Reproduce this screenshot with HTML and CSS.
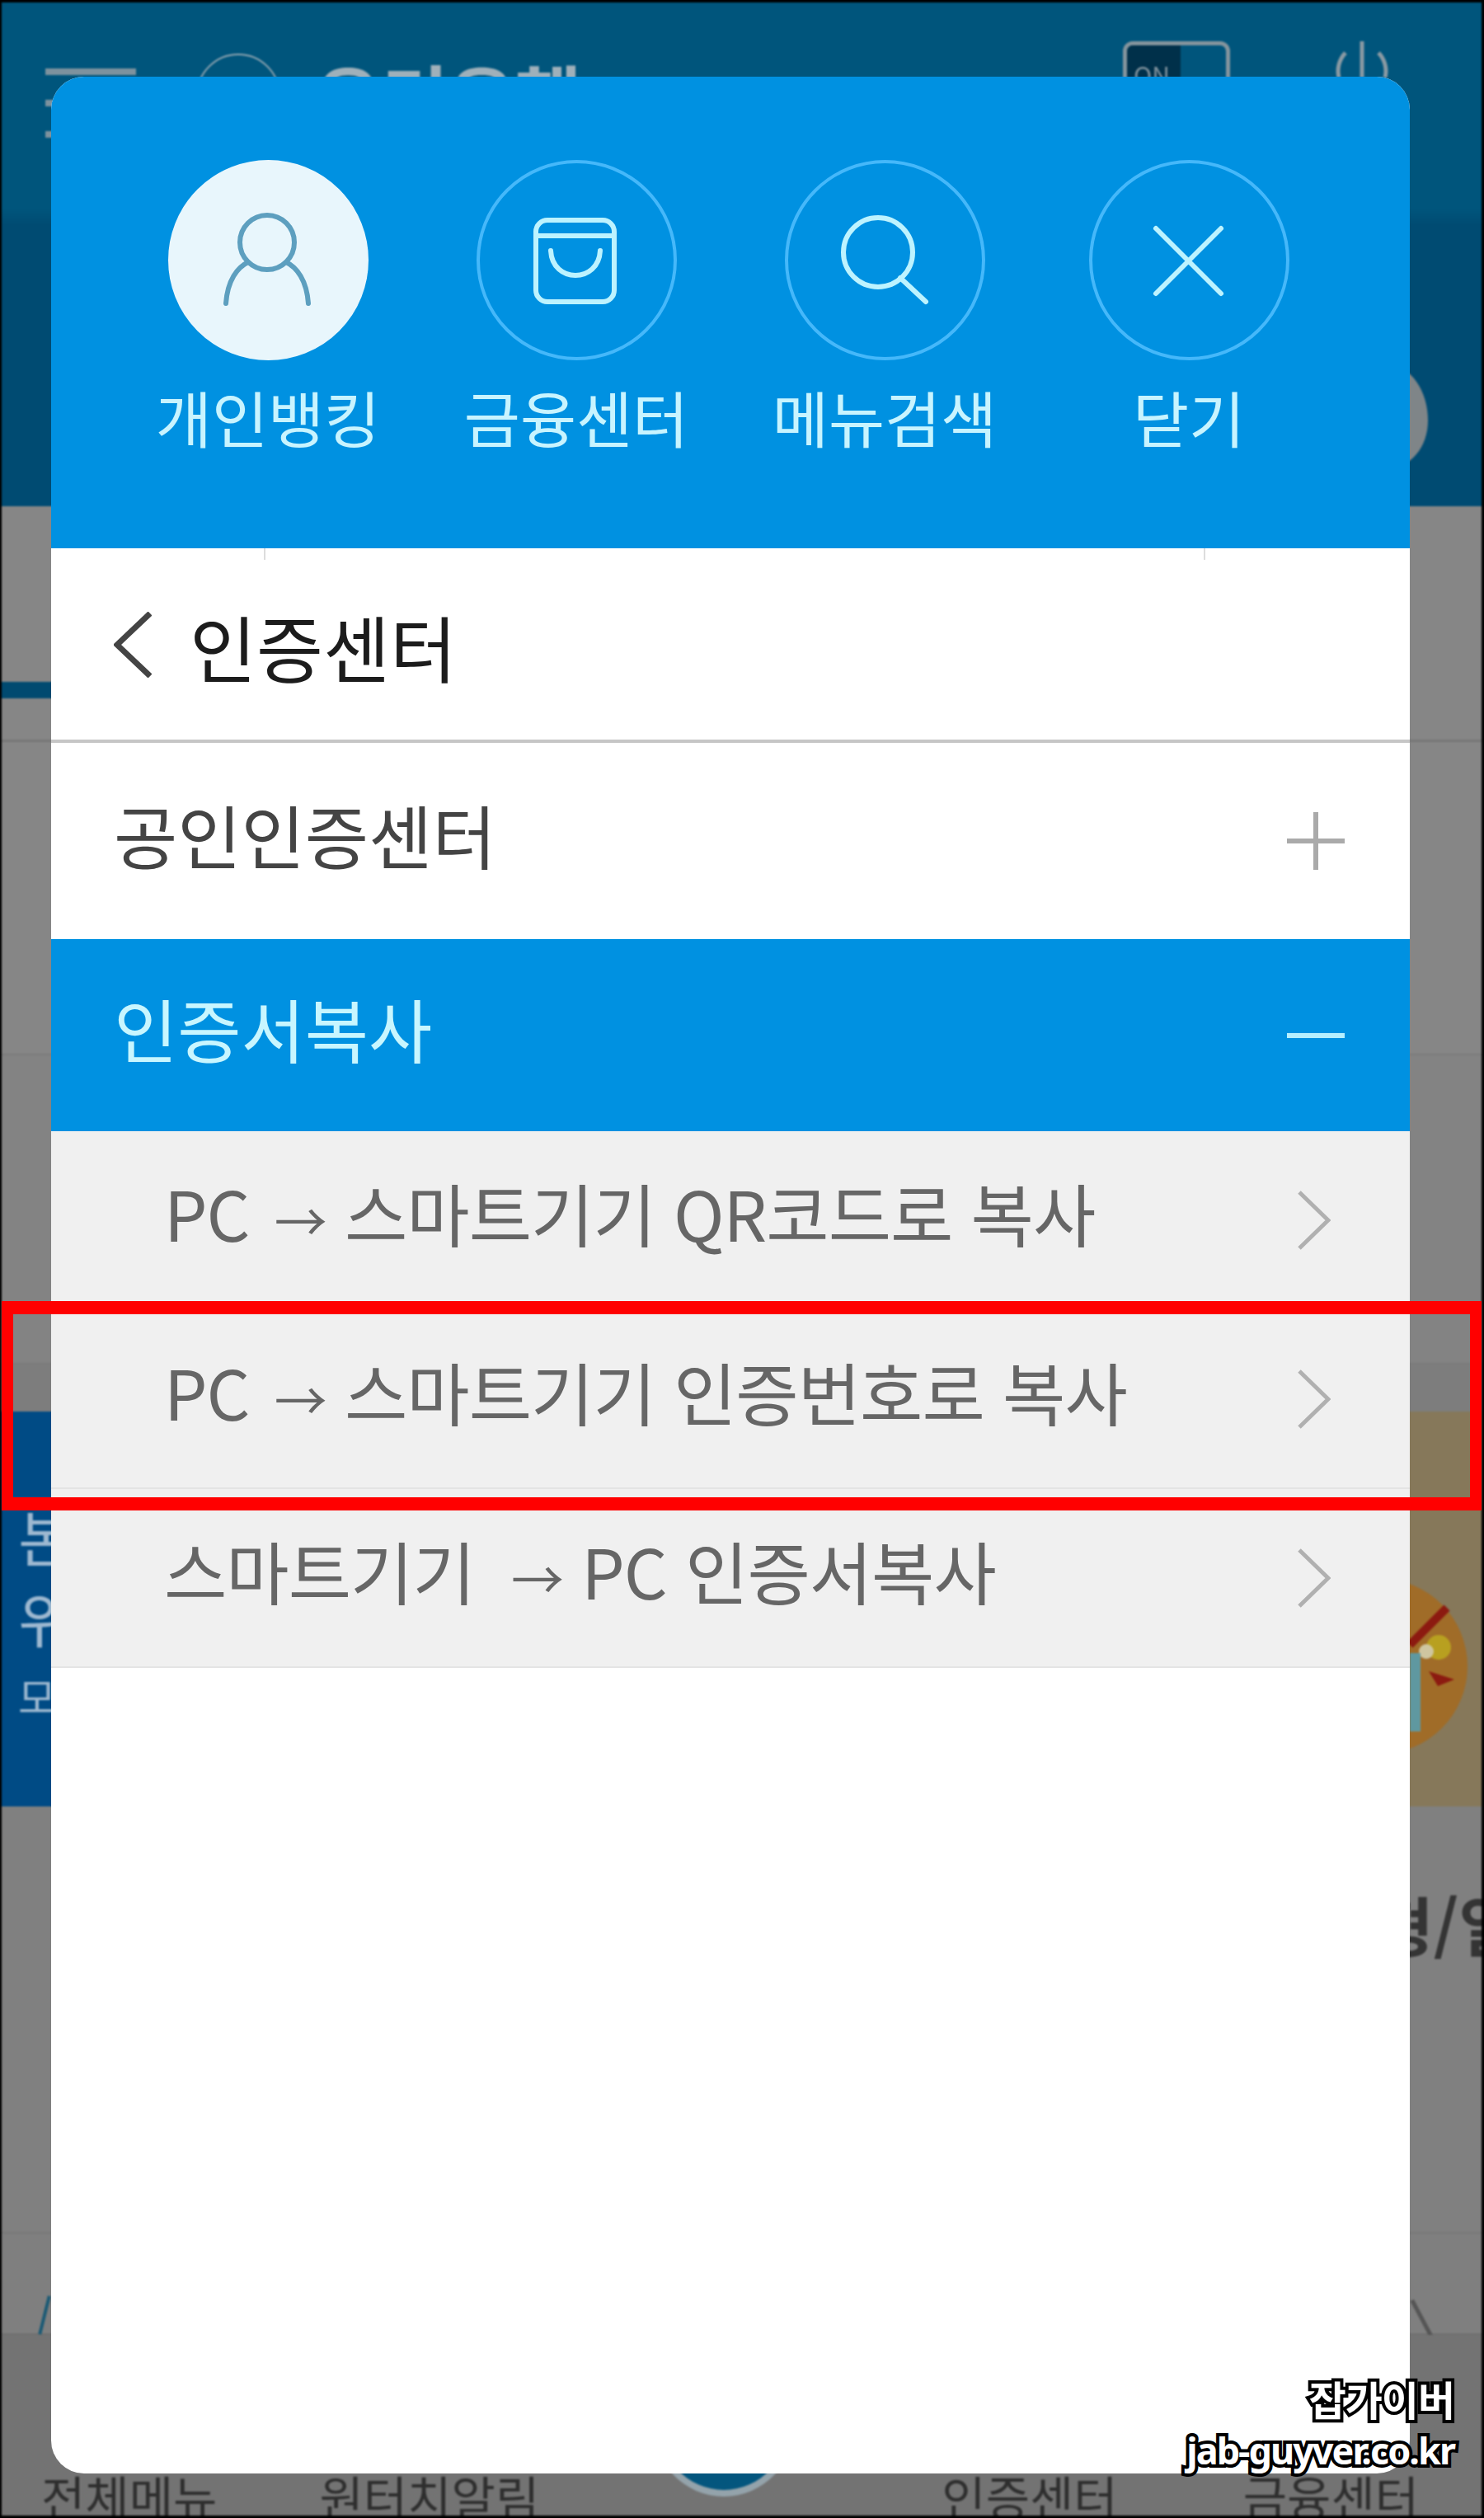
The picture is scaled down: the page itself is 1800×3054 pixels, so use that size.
FILE: index.html
```html
<!DOCTYPE html>
<html lang="ko">
<head>
    <meta charset="UTF-8">
    <meta name="viewport" content="width=device-width, initial-scale=1.0">
    <title>인증센터</title>
    <link rel="stylesheet" href="styles.css">
</head>
<body>
<div class="page">
    <!-- dimmed app behind the menu -->
    <div class="app">
        <header class="app-top">
            <div class="burger"><span></span><span></span><span></span></div>
            <div class="logo-ring"></div>
            <div class="bank-name">우리은행</div>
            <div class="toggle"><span class="toggle-on">ON</span></div>
            <svg class="power" viewBox="0 0 76 70"><path d="M38 0V44M18 14A32 32 0 0 0 10 44M58 14A32 32 0 0 1 66 44" fill="none" stroke="#8a9aa3" stroke-width="5"/></svg>
            <div class="face"></div>
        </header>
        <div class="tabs"><span class="tab-bar"></span></div>
        <div class="plain plain-a"></div>
        <div class="plain plain-b"></div>
        <div class="plain plain-c"></div>
        <div class="banner">
            <div class="banner-left">
                <div class="banner-big">본</div>
                <div class="banner-big">위</div>
                <div class="banner-small">모</div>
            </div>
            <div class="banner-right">
                <svg class="emblem" viewBox="0 0 212 212">
                    <circle cx="106" cy="106" r="106" fill="#a06c28"/>
                    <path d="M142 80L187 35" stroke="#8c1a10" stroke-width="10"/>
                    <circle cx="177" cy="83" r="15" fill="#b8a020"/>
                    <circle cx="162" cy="88" r="9" fill="#cfc6a0"/>
                    <path d="M165 112L196 122L176 130Z" fill="#8c1a10"/>
                    <rect x="142" y="90" width="13" height="95" fill="#5f98a0"/>
                </svg>
            </div>
        </div>
        <div class="card-row"><span class="card-text">형/일</span></div>
        <div class="slide-row"><span class="slide-left"></span><span class="slide-right"></span></div>
        <nav class="tabbar">
            <span>전체메뉴</span>
            <span>원터치알림</span>
            <span class="tab-round"></span>
            <span>인증센터</span>
            <span>금융센터</span>
        </nav>
    </div>

    <!-- menu panel -->
    <div class="panel">
        <div class="panel-head">
            <div class="quick">
                <div class="quick-circle active">
                    <svg viewBox="0 0 243 243"><ellipse cx="120" cy="100" rx="33" ry="33" /><path d="M70 174C72 146 84 130 97 124M170 174C168 146 156 130 143 124"/></svg>
                </div>
                <div class="quick-label">개인뱅킹</div>
            </div>
            <div class="quick">
                <div class="quick-circle">
                    <svg viewBox="0 0 243 243"><rect x="72" y="73" width="95" height="99" rx="14"/><path d="M72 92H167M90 110C92 150 148 150 150 110"/></svg>
                </div>
                <div class="quick-label">금융센터</div>
            </div>
            <div class="quick">
                <div class="quick-circle">
                    <svg viewBox="0 0 243 243"><circle cx="113" cy="112" r="42"/><path d="M140 143L171 172"/></svg>
                </div>
                <div class="quick-label">메뉴검색</div>
            </div>
            <div class="quick">
                <div class="quick-circle">
                    <svg viewBox="0 0 243 243"><path d="M81 83L160 162M160 83L81 162"/></svg>
                </div>
                <div class="quick-label">닫기</div>
            </div>
        </div>

        <div class="title-row">
            <svg class="back" viewBox="0 0 46 80"><path d="M44 2L4 40L44 78"/></svg>
            <span>인증센터</span>
        </div>

        <div class="menu-row">
            <span>공인인증센터</span>
            <svg class="sign" viewBox="0 0 70 70"><path d="M0 35H70M35 0V70"/></svg>
        </div>
        <div class="menu-row open">
            <span>인증서복사</span>
            <svg class="sign" viewBox="0 0 70 70"><path d="M0 35H70"/></svg>
        </div>

        <div class="sub-list">
            <div class="sub-row">
                <span class="sub-text">PC <i class="arrow">→</i> 스마트기기 QR코드로 복사</span>
                <svg class="chev" viewBox="0 0 40 72"><path d="M2 2L37 36L2 70"/></svg>
            </div>
            <div class="sub-row">
                <span class="sub-text">PC <i class="arrow">→</i> 스마트기기 인증번호로 복사</span>
                <svg class="chev" viewBox="0 0 40 72"><path d="M2 2L37 36L2 70"/></svg>
            </div>
            <div class="sub-row">
                <span class="sub-text">스마트기기 <i class="arrow arrow-mid">→</i> PC 인증서복사</span>
                <svg class="chev" viewBox="0 0 40 72"><path d="M2 2L37 36L2 70"/></svg>
            </div>
        </div>
    </div>

    <div class="red-box"></div>

    <div class="watermark">
        <div class="wm-name">잡가이버</div>
        <div class="wm-url">jab-guyver.co.kr</div>
    </div>
</div>
</body>
</html>
```

FILE: styles.css
```css
* { box-sizing: border-box; }
html, body { margin: 0; padding: 0; background: #000; }
body { font-family: "Noto Sans CJK KR", "Noto Sans", sans-serif; }

.page { position: relative; width: 1800px; height: 3054px; padding: 3px 3px 3px 2px; overflow: hidden; background: #000; }

/* app behind */
.app { display: flex; flex-direction: column; height: 100%; overflow: hidden; background: #868686; filter: blur(0.8px); }
.app-top { position: relative; display: flex; align-items: flex-start; height: 611px; flex: none; background: linear-gradient(#00557c 0, #00557c 250px, #004b72 270px, #004b72 100%); }
.burger { display: flex; flex-direction: column; gap: 30px; width: 110px; margin: 80px 0 0 53px; }
.burger span { height: 8px; background: #7d929e; }
.logo-ring { width: 102px; height: 102px; margin: 62px 0 0 73px; border: 2px solid #8fa5b1; border-radius: 50%; }
.bank-name { margin: 52px 0 0 42px; font-size: 88px; line-height: 120px; font-weight: 700; color: #9fb0ba; white-space: nowrap; }
.toggle { position: absolute; left: 1360px; top: 47px; width: 130px; height: 90px; border: 5px solid #84949d; border-radius: 12px; overflow: hidden; }
.toggle-on { display: block; width: 65px; height: 100%; padding-left: 8px; background: #00304a; color: #7f919c; font-size: 30px; line-height: 70px; }
.power { position: absolute; left: 1612px; top: 47px; width: 76px; height: 70px; }
.face { position: absolute; left: 1680px; top: 440px; width: 50px; height: 125px; border-radius: 0 50px 50px 0 / 0 70px 60px 0; background: #7f8588; }

.tabs { flex: none; height: 286px; padding-top: 213px; background: #868686; border-bottom: 3px solid #777; }
.tab-bar { display: block; width: 70px; height: 20px; background: #004a70; }
.plain { flex: none; background: #868686; border-bottom: 2px solid #7b7b7b; }
.plain-a { height: 380px; }
.plain-b { height: 375px; background: #838383; }
.plain-c { height: 57px; border-bottom: 0; background: #7d7d7d; }

.banner { flex: none; display: flex; height: 479px; }
.banner-left { width: 900px; padding: 100px 0 0 20px; background: #004b85; color: #9db8d0; }
.banner-big { font-size: 74px; line-height: 100px; }
.banner-small { margin-top: 14px; font-size: 50px; line-height: 60px; }
.banner-right { flex: 1; display: flex; justify-content: flex-end; align-items: flex-start; background: #86785a; }
.emblem { width: 212px; height: 212px; margin: 203px 17px 0 0; }

.card-row { flex: none; display: flex; justify-content: flex-end; height: 516px; padding-top: 82px; background: #808080; overflow: hidden; }
.card-text { margin-right: -44px; font-size: 78px; line-height: 120px; font-weight: 700; color: #343434; }

.slide-row { position: relative; flex: none; height: 125px; background: #7f7f7f; border-top: 2px solid #777; border-bottom: 2px solid #6f6f6f; }
.slide-left { position: absolute; left: 50px; top: 75px; width: 4px; height: 48px; background: #1b5a75; transform: rotate(14deg); }
.slide-right { position: absolute; left: 1720px; top: 78px; width: 5px; height: 50px; background: #555; transform: rotate(-28deg); }

.tabbar { position: relative; flex: 1; display: flex; align-items: flex-start; background: #737373; color: #2e2e2e; font-size: 58px; line-height: 70px; white-space: nowrap; padding: 160px 0 0 48px; }
.tabbar span:nth-child(2) { margin-left: 124px; }
.tabbar span:nth-child(4) { margin-left: 488px; }
.tabbar span:nth-child(5) { margin-left: 152px; }
.tab-round { position: absolute; left: 788px; top: 10px; width: 176px; height: 186px; border: 8px solid #94a3ab; border-radius: 50%; background: #04567e; }

/* menu panel */
.panel { position: absolute; left: 62px; top: 93px; display: flex; flex-direction: column; width: 1648px; height: 2907px; background: #fff; border-radius: 40px; overflow: hidden; filter: blur(0.7px); }
.panel-head { flex: none; position: relative; height: 572px; background: #0091e1; }
.quick { position: absolute; top: 101px; width: 300px; display: flex; flex-direction: column; align-items: center; }
.quick:nth-child(1) { left: 113px; }
.quick:nth-child(2) { left: 487px; }
.quick:nth-child(3) { left: 861px; }
.quick:nth-child(4) { left: 1230px; }
.quick-circle { width: 243px; height: 243px; border: 4px solid #45b8fa; border-radius: 50%; }
.quick-circle.active { background: #e8f6fc; border-color: #e8f6fc; }
.quick-circle svg { display: block; width: 243px; height: 243px; margin: -4px; fill: none; stroke: #bdf3ff; stroke-width: 6; stroke-linecap: round; }
.quick-circle.active svg { stroke: #5d9fbf; }
.quick-label { margin-top: 20px; font-size: 74px; line-height: 96px; color: #c8f4ff; white-space: nowrap; }

.title-row { position: relative; flex: none; display: flex; align-items: center; gap: 46px; height: 236px; padding: 2px 0 0 76px; border-bottom: 4px solid #c6c6c6; font-size: 88px; color: #1c1c1c; }
.title-row::before { content: ""; position: absolute; left: 258px; top: 0; width: 1138px; height: 14px; border-left: 2px solid #ddd; border-right: 2px solid #ddd; }
.back { flex: none; width: 46px; height: 80px; fill: none; stroke: #444; stroke-width: 7; }

.menu-row { flex: none; display: flex; align-items: center; justify-content: space-between; height: 238px; padding: 0 79px 0 76px; font-size: 84px; color: #444; background: #fff; }
.menu-row span { margin-bottom: 18px; }
.menu-row.open { height: 233px; background: #0091e1; color: #c8f6ff; }
.sign { flex: none; width: 70px; height: 70px; fill: none; stroke: #aaa; stroke-width: 6; }
.menu-row.open .sign { stroke: #b5efff; }

.sub-list { flex: none; background: #f0f0f0; }
.sub-row { display: flex; align-items: center; justify-content: space-between; height: 217px; padding: 0 96px 0 137px; font-size: 83px; letter-spacing: -1px; color: #666; border-bottom: 2px solid #e4e4e4; white-space: nowrap; }
.sub-text { margin-bottom: 20px; }
.arrow { margin-left: 8px; font-style: normal; font-size: 64px; }
.arrow-mid { margin-left: 22px; }
.chev { flex: none; width: 40px; height: 72px; fill: none; stroke: #b0b0b0; stroke-width: 5; }

/* overlays */
.red-box { position: absolute; left: 2px; top: 1578px; width: 1795px; height: 254px; border: solid #f00; border-width: 16px 14px; }

.watermark { position: absolute; right: 36px; top: 2874px; display: flex; flex-direction: column; align-items: flex-end; color: #fff; font-weight: 700; paint-order: stroke fill; -webkit-text-stroke: 8px #000; }
.wm-name { font-size: 49px; line-height: 70px; letter-spacing: -1px; }
.wm-url { font-family: "Noto Sans", sans-serif; font-size: 45px; line-height: 56px; letter-spacing: -2px; }
```
